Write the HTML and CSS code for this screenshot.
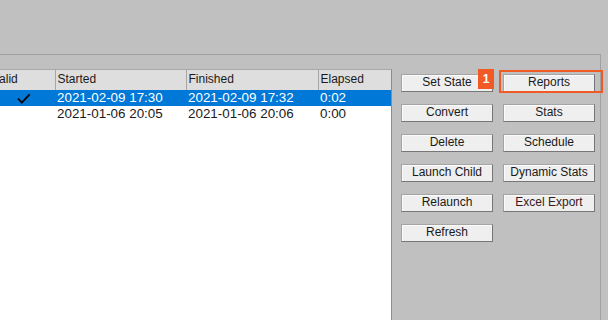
FILE: index.html
```html
<!DOCTYPE html>
<html lang="en">
<head>
  <meta charset="UTF-8">
  <meta name="viewport" content="width=device-width, initial-scale=1.0">
  <title>Job Monitor</title>
  <link rel="stylesheet" href="styles.css">
</head>
<body>
  <div class="frame">
    <!-- Job list -->
    <div class="grid-wrap">
      <table class="jobs">
        <colgroup>
          <col class="c-valid">
          <col class="c-started">
          <col class="c-finished">
          <col class="c-elapsed">
        </colgroup>
        <thead>
          <tr>
            <th>Valid</th>
            <th>Started</th>
            <th>Finished</th>
            <th>Elapsed</th>
          </tr>
        </thead>
        <tbody>
          <tr class="selected">
            <td class="valid">
              <svg class="check" width="14" height="12" viewBox="0 0 14 12">
                <path d="M1 5.5 L4.8 9.6 L12.6 1.4" fill="none" stroke="#000" stroke-width="1.8"/>
              </svg>
            </td>
            <td>2021-02-09 17:30</td>
            <td>2021-02-09 17:32</td>
            <td>0:02</td>
          </tr>
          <tr>
            <td class="valid"></td>
            <td>2021-01-06 20:05</td>
            <td>2021-01-06 20:06</td>
            <td>0:00</td>
          </tr>
        </tbody>
      </table>
    </div>

    <!-- Actions -->
    <div class="actions">
      <div class="btn-cell">
        <button>Set State</button>
        <span class="badge">1</span>
      </div>
      <div class="btn-cell">
        <button>Reports</button>
        <span class="highlight"></span>
      </div>
      <div class="btn-cell"><button>Convert</button></div>
      <div class="btn-cell"><button>Stats</button></div>
      <div class="btn-cell"><button>Delete</button></div>
      <div class="btn-cell"><button>Schedule</button></div>
      <div class="btn-cell"><button>Launch Child</button></div>
      <div class="btn-cell"><button>Dynamic Stats</button></div>
      <div class="btn-cell"><button>Relaunch</button></div>
      <div class="btn-cell"><button class="dark-red">Excel Export</button></div>
      <div class="btn-cell"><button>Refresh</button></div>
    </div>
  </div>
</body>
</html>
```

FILE: styles.css
```css
body {
  margin: 0;
  height: 320px;
  overflow: hidden;
  background-color: #c0c0c0;
  font-family: Arial, "Liberation Sans", sans-serif;
  color: #1a1a1a;
}
.frame {
  margin-top: 54px;
  width: 601px;
  height: 266px;
  border-top: 1px solid #a0a0a0;
  border-right: 1px solid #a0a0a0;
  box-sizing: border-box;
  padding-top: 14px;
  display: flex;
}
.grid-wrap {
  width: 392px;
  box-sizing: border-box;
  background-color: #fff;
  border-right: 1px solid #8c8c8c;
  border-top: 1px solid #a8a8a8;
  overflow: hidden;
}
.jobs {
  margin-left: -10px;
  border-collapse: collapse;
  table-layout: fixed;
  width: 401px;
}
.c-valid { width: 65px; }
.c-started { width: 131px; }
.c-finished { width: 132px; }
.c-elapsed { width: 73px; }
.jobs th {
  height: 20px;
  padding: 0 3px 3px 2px;
  box-sizing: border-box;
  background-color: #dedede;
  border-right: 1px solid #a6a6a6;
  font-weight: normal;
  font-size: 12px;
  text-align: left;
  white-space: nowrap;
  overflow: hidden;
}
.jobs td {
  height: 16px;
  padding: 0 2px;
  font-size: 13.4px;
  line-height: 16px;
  white-space: nowrap;
  overflow: hidden;
}
.jobs td.valid {
  text-align: center;
  padding: 0;
}
.check {
  display: block;
  margin: 1px auto 0 auto;
  position: relative;
  left: 1px;
}
.jobs tr.selected td {
  background-color: #0078d7;
  color: #fff;
}

/* button panel */
.actions {
  display: grid;
  grid-template-columns: 92px 92px;
  grid-auto-rows: 18px;
  column-gap: 10px;
  row-gap: 12px;
  padding: 3px 0 0 9px;
  align-content: start;
}
.btn-cell {
  position: relative;
}
.actions button {
  width: 100%;
  height: 18px;
  padding: 0 0 1px 0;
  margin: 0;
  font-family: Arial, "Liberation Sans", sans-serif;
  font-size: 12px;
  color: #1a1a1a;
  background-color: #efefef;
  border: 1px solid #a4a4a4;
  border-right-color: #767676;
  border-bottom-color: #767676;
  box-shadow: inset 1px 1px 0 #fbfbfb;
}
.actions button.dark-red {
  color: #3a1a1a;
}
.badge {
  position: absolute;
  right: -1px;
  top: -3px;
  width: 16px;
  height: 20px;
  background-color: #f15a24;
  color: #fff;
  font-size: 12px;
  font-weight: bold;
  line-height: 20px;
  text-align: center;
}
.highlight {
  position: absolute;
  left: -4px;
  top: -2px;
  width: 100px;
  height: 19px;
  border: 2px solid #f15a24;
}
```
